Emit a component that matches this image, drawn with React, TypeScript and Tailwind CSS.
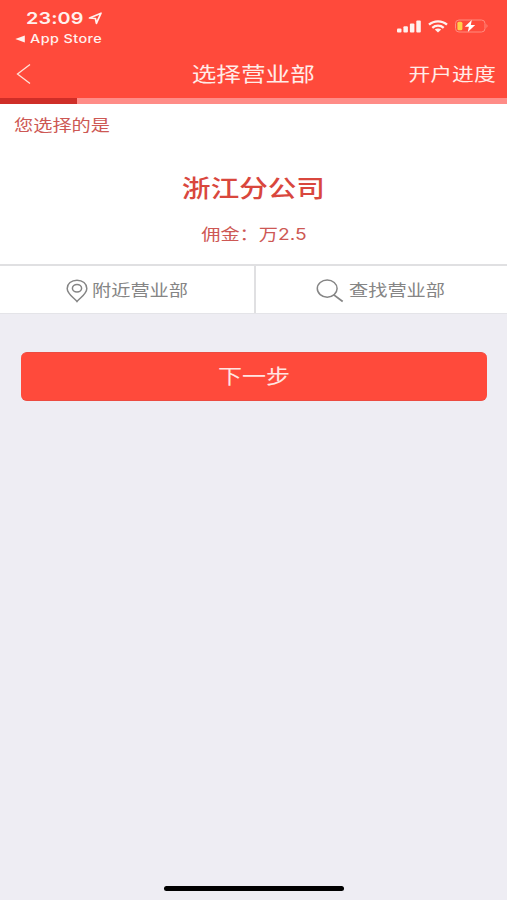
import type { ReactNode } from 'react';

const CJK = "font-['Noto_Sans_CJK_SC',sans-serif]";
const LATIN = "font-['Inter','Liberation_Sans',sans-serif]";

function Wide({ className = '', children }: { className?: string; children: ReactNode }) {
  return (
    <span className={`inline-block whitespace-nowrap scale-x-120 ${className}`}>{children}</span>
  );
}

function StatusBar() {
  return (
    <div className={`flex h-[50px] justify-between pl-[15px] pr-[18px] pt-[8px] ${LATIN}`}>
      <div>
        <div className="flex h-5 items-center pl-[11px]">
          <span className="w-[60px] whitespace-nowrap">
            <Wide className="origin-left text-[16.5px] font-semibold leading-5 tracking-[0.1px]">23:09</Wide>
          </span>
          <svg width="15" height="13" viewBox="0 0 15 13" className="ml-[2px]" fill="none" stroke="currentColor" strokeWidth="1.7" strokeLinejoin="round">
            <path d="M1.5 6 L13 1.2 L8.4 11.3 L7.4 6.5 Z" />
          </svg>
        </div>
        <div className="mt-[2px] flex h-[18px] items-center">
          <svg width="10" height="8" viewBox="0 0 10 8" fill="currentColor">
            <path d="M0.3 4 L9.8 0.5 V7.5 Z" />
          </svg>
          <Wide className="ml-[5px] origin-left text-[12px] font-medium leading-[18px] tracking-[0.35px]">App Store</Wide>
        </div>
      </div>
      <div className="mt-[11px] flex h-[14px] items-center">
        <svg width="24" height="13" viewBox="0 0 24 13" fill="currentColor">
          <rect x="0" y="8.5" width="4.5" height="4" rx="1" />
          <rect x="6.4" y="6.3" width="4.5" height="6.2" rx="1" />
          <rect x="12.9" y="3.5" width="4.5" height="9" rx="1" />
          <rect x="19.3" y="0.6" width="4.5" height="11.9" rx="1" />
        </svg>
        <svg width="20" height="13" viewBox="0 0 20 13" className="ml-[7px]" fill="none" stroke="currentColor" strokeWidth="2.3">
          <path d="M1 4.7 C6 0.2 14 0.2 19 4.7" />
          <path d="M4.3 7.8 C7.5 4.9 12.5 4.9 15.7 7.8" />
          <path d="M6.8 9.6 C8.7 8.1 11.3 8.1 13.2 9.6 L10 12.5 Z" fill="currentColor" stroke="none" />
        </svg>
        <svg width="34" height="14" viewBox="0 0 34 14" className="ml-[7px]">
          <rect x="0.5" y="1" width="29.5" height="12" rx="3.5" fill="none" stroke="#ff8b7f" strokeWidth="1" />
          <path d="M31.5 5 Q33.5 7 31.5 9 Z" fill="#ff8b7f" />
          <rect x="2.4" y="2.8" width="5" height="8.4" rx="1.5" fill="#ffd04a" />
          <path d="M16.8 1 L9.8 7.7 H13.9 L12.8 13 L20.2 6 H15.8 Z" fill="#fff" />
        </svg>
      </div>
    </div>
  );
}

function NavBar() {
  return (
    <div className={`grid h-12 grid-cols-[1fr_auto_1fr] items-center ${CJK}`}>
      <svg width="15" height="22" viewBox="0 0 15 22" className="ml-4" fill="none" stroke="#ffe3d8" strokeWidth="1.3">
        <path d="M14 1.5 L1.5 11 L14 20.5" />
      </svg>
      <Wide className="mb-[2px] text-[20.5px] leading-[46px] text-[#ffece8]">选择营业部</Wide>
      <Wide className="mb-[2px] mr-[11px] origin-right justify-self-end text-[18.2px] leading-[46px] text-[#ffece8]">开户进度</Wide>
    </div>
  );
}

export default function App() {
  return (
    <div className="flex h-[900px] w-[507px] flex-col overflow-hidden bg-[#eeedf3]">
      <header className="h-[98px] shrink-0 bg-[#ff4a3b] text-[#fff1ee]">
        <StatusBar />
        <NavBar />
      </header>
      <div className="h-[6px] shrink-0 bg-[#ff8c87]">
        <div className="h-full w-[77px] bg-[#cf2e28]" />
      </div>

      <section className={`flex h-[160px] shrink-0 flex-col bg-white text-[#cd5854] ${CJK}`}>
        <div className="h-[42px] pl-[14px]">
          <Wide className="origin-left text-[16px] leading-[40px]">您选择的是</Wide>
        </div>
        <div className="flex h-[82px] items-center justify-center">
          <Wide className="text-[23.8px] font-medium leading-9 text-[#d9473d]">浙江分公司</Wide>
        </div>
        <div className="-mt-[7px] flex h-6 items-center justify-center">
          <Wide className="text-[16px] leading-6">
            佣金：万<span className={LATIN}>2.5</span>
          </Wide>
        </div>
      </section>

      <div className={`flex h-[50px] shrink-0 border-b border-t-2 border-b-[#e4e4e8] border-t-[#e0e0e2] bg-white text-[#858585] ${CJK}`}>
        <div className="flex w-[256px] items-center border-r-2 border-[#e0e0e2] pl-[66px]">
          <svg width="22" height="24" viewBox="0 0 22 24" className="mt-[2px]" fill="none" stroke="currentColor" strokeWidth="1.5">
            <path d="M11 22.5 C8.2 18.8 1.2 15 1.2 9.4 C1.2 4.7 5.4 1.2 11 1.2 C16.6 1.2 20.8 4.7 20.8 9.4 C20.8 15 13.8 18.8 11 22.5 Z" />
            <ellipse cx="11" cy="9.2" rx="4.6" ry="3.8" />
          </svg>
          <Wide className="mb-[2px] ml-1 origin-left text-[16px] leading-6">附近营业部</Wide>
        </div>
        <div className="flex flex-1 items-center pl-[60px]">
          <svg width="28" height="24" viewBox="0 0 28 24" className="mt-[2px]" fill="none" stroke="currentColor" strokeWidth="1.5">
            <ellipse cx="11.2" cy="9.6" rx="9.9" ry="8.6" />
            <path d="M17.8 15.9 L26.7 22.5" strokeWidth="1.8" />
          </svg>
          <Wide className="mb-[2px] ml-[5px] origin-left text-[16px] leading-6">查找营业部</Wide>
        </div>
      </div>

      <button className={`ml-[21px] mt-[38px] h-[49px] w-[466px] shrink-0 rounded-[6px] border-y border-[#ec4b40] bg-[#ff4a3b] text-[#ffe5e1] ${CJK}`}>
        <Wide className="mb-[2px] text-[20px] leading-[45px]">下一步</Wide>
      </button>

      <div className="mb-[9px] ml-[164px] mt-auto h-[5px] w-[180px] shrink-0 rounded-full bg-black" />
    </div>
  );
}
